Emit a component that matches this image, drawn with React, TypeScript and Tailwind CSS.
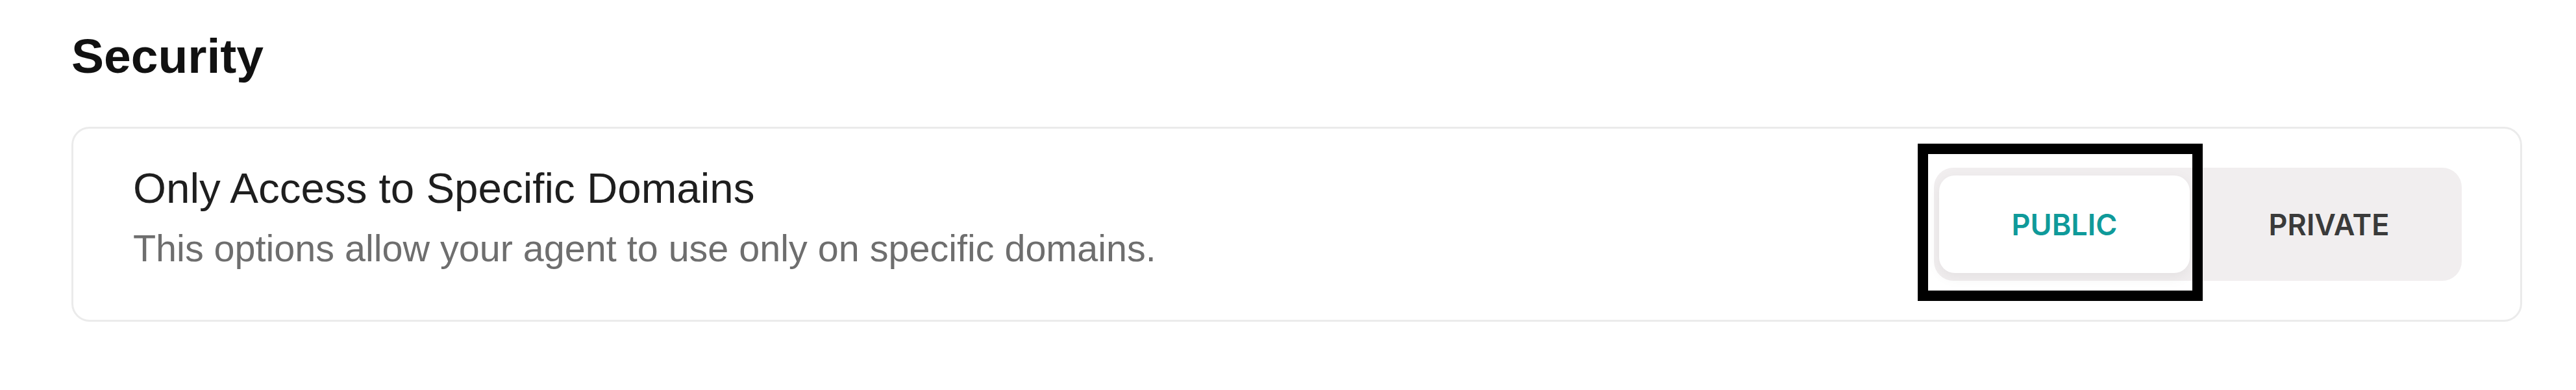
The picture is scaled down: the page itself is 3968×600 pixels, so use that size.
export default function App() {
  return (
    <div className="w-[3968px] h-[600px] bg-white pl-[110px] pr-[83px] pt-[49px] font-['Liberation_Sans',Arial,sans-serif]">
      <h2 className="text-[75px] leading-[74px] font-bold text-[#111111]">Security</h2>

      <div className="mt-[72px] h-[300px] rounded-[28px] border-[3px] border-[#ebebeb] bg-white pl-[92px] pr-[90px] flex items-center justify-between">
        <div className="pb-[22px]">
          <p className="text-[65.5px] leading-[65px] text-[#1e1e1e]">Only Access to Specific Domains</p>
          <p className="mt-[32px] text-[57.5px] leading-[57px] text-[#6e6e6e]">
            This options allow your agent to use only on specific domains.
          </p>
        </div>

        <div className="relative">
          <div className="flex h-[174px] rounded-[30px] bg-[#f1eeef] pl-[8px] py-[12px] font-['Inter',sans-serif] font-semibold text-[45px] leading-[45px]">
            <button
              type="button"
              className="w-[386px] rounded-[24px] bg-white text-[#0f9a9a] shadow-[0_6px_22px_rgba(0,0,0,0.06)] flex items-center justify-center"
            >
              PUBLIC
            </button>
            <button type="button" className="w-[419px] pl-[10px] text-[#3a3a3a] flex items-center justify-center">
              PRIVATE
            </button>
          </div>
          {/* highlight frame drawn over the selected option */}
          <div className="absolute left-[-25px] top-[-37px] w-[439px] h-[242px] border-[16px] border-black pointer-events-none" />
        </div>
      </div>
    </div>
  );
}
